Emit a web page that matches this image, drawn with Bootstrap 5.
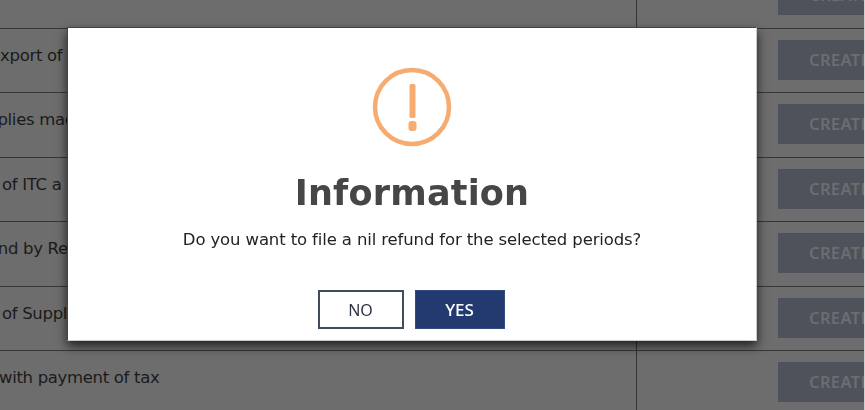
<!DOCTYPE html>
<html lang="en">
<head>
<meta charset="utf-8">
<meta name="viewport" content="width=device-width, initial-scale=1">
<title>Refund</title>
<link href="https://cdn.jsdelivr.net/npm/bootstrap@5.3.0/dist/css/bootstrap.min.css" rel="stylesheet">
<style>
body{height:410px;background:#6d6d6d;font-family:"DejaVu Sans",sans-serif;font-size:16.5px;letter-spacing:-.32px;color:#1b1b1b}
.periods{width:864px;height:410px}
.sheet{margin-top:-36px}
.period{height:64.5px;border-bottom:1.5px solid #363636}
.desc{width:637px;border-right:1.5px solid #353535;padding-top:15px;line-height:24px}
.desc span{display:inline-block;white-space:nowrap}
.cut-10{margin-left:-10px}
.cut-31{margin-left:-33px}
.cut-38{margin-left:-38px}
.in-3{margin-left:2px}
.cut-1{margin-left:-1px}
.create{width:130px;height:40px;margin:11px 0 0 141px;padding:0 0 0 31px;background:#4e525b;color:#6b6d70;border-radius:0;font:600 16.5px/40px "Noto Sans",sans-serif;text-align:left;letter-spacing:.35px;border:0}
.edge{width:1px;background:#cfcfcf}
.modal-box{width:690px;height:314px;margin:27px 0 0 67px;border:1px solid #c8cacb;border-top-color:#444;border-left-color:#444;box-shadow:0 5px 10px rgba(0,0,0,.7)}
.alert-icon{width:80px;height:80px;margin-top:39px}
.heading{font:bold 35px/44px "DejaVu Sans",sans-serif;letter-spacing:.2px;color:#464646;margin:24px 0 0}
.question{line-height:24px;margin:13px 0 0;color:#222;letter-spacing:-.13px}
.actions{gap:11px;margin-top:38px;margin-right:2px}
.act{height:39px;border-radius:0;padding:0;letter-spacing:0}
.act-no{width:86px;border:2px solid #414b5d;color:#2c3547;font:16px/36px "Noto Sans",sans-serif}
.act-yes{width:90px;background:#223a70;border:1px solid #354b80;color:#fff;font:500 17px/37px "Noto Sans",sans-serif}
</style>
<script src="https://cdn.jsdelivr.net/npm/bootstrap@5.3.0/dist/js/bootstrap.bundle.min.js"></script>
</head>
<body class="overflow-hidden">
<div class="d-flex overflow-hidden">
<main class="periods overflow-hidden flex-shrink-0">
<div class="sheet">
<div class="period d-flex"><div class="desc flex-shrink-0"></div><button class="btn create flex-shrink-0">CREATE</button></div>
<div class="period d-flex"><div class="desc flex-shrink-0"><span class="cut-10">Export of</span></div><button class="btn create flex-shrink-0">CREATE</button></div>
<div class="period d-flex"><div class="desc flex-shrink-0"><span class="cut-31">Supplies made</span></div><button class="btn create flex-shrink-0">CREATE</button></div>
<div class="period d-flex"><div class="desc flex-shrink-0"><span class="in-3">of ITC a</span></div><button class="btn create flex-shrink-0">CREATE</button></div>
<div class="period d-flex"><div class="desc flex-shrink-0"><span class="cut-38">Refund by Re</span></div><button class="btn create flex-shrink-0">CREATE</button></div>
<div class="period d-flex"><div class="desc flex-shrink-0"><span class="in-3">of Supplies</span></div><button class="btn create flex-shrink-0">CREATE</button></div>
<div class="period d-flex"><div class="desc flex-shrink-0"><span class="cut-1">with payment of tax</span></div><button class="btn create flex-shrink-0">CREATE</button></div>
</div>
</main>
<div class="edge"></div>
</div>
<div class="modal d-block" tabindex="-1" role="dialog" aria-labelledby="title">
<div class="modal-box bg-white d-flex flex-column align-items-center">
<svg class="alert-icon flex-shrink-0" viewBox="0 0 80 80" aria-hidden="true"><circle cx="40" cy="40" r="37" fill="none" stroke="#f6ac71" stroke-width="4.5"/><rect x="37.5" y="17" width="6" height="34" rx="1.5" fill="#f6ac71"/><rect x="36.5" y="54" width="8" height="10" rx="3" fill="#f6ac71"/></svg>
<h2 class="heading" id="title">Information</h2>
<p class="question text-nowrap">Do you want to file a nil refund for the selected periods?</p>
<div class="d-flex actions"><button class="btn act act-no">NO</button><button class="btn act act-yes">YES</button></div>
</div>
</div>
</body>
</html>
